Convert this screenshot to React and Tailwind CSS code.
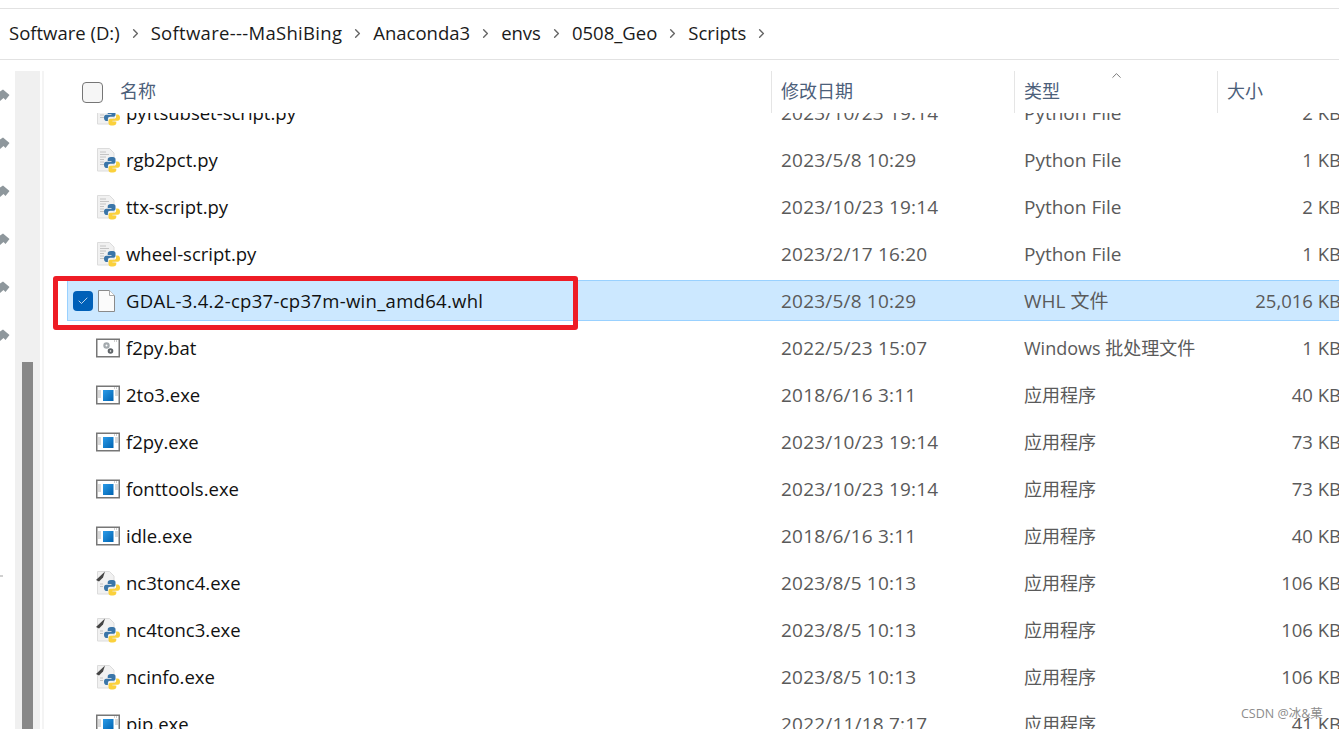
import { ChevronRight, ChevronUp, Check } from "lucide-react";

const crumbs = ["Software (D:)", "Software---MaShiBing", "Anaconda3", "envs", "0508_Geo", "Scripts"];

const files = [
  { name: "pyftsubset-script.py", date: "2023/10/23 19:14", type: "Python File", size: "2 KB", icon: "py" },
  { name: "rgb2pct.py", date: "2023/5/8 10:29", type: "Python File", size: "1 KB", icon: "py" },
  { name: "ttx-script.py", date: "2023/10/23 19:14", type: "Python File", size: "2 KB", icon: "py" },
  { name: "wheel-script.py", date: "2023/2/17 16:20", type: "Python File", size: "1 KB", icon: "py" },
  { name: "GDAL-3.4.2-cp37-cp37m-win_amd64.whl", date: "2023/5/8 10:29", type: "WHL 文件", size: "25,016 KB", icon: "file", selected: true },
  { name: "f2py.bat", date: "2022/5/23 15:07", type: "Windows 批处理文件", size: "1 KB", icon: "bat" },
  { name: "2to3.exe", date: "2018/6/16 3:11", type: "应用程序", size: "40 KB", icon: "exe" },
  { name: "f2py.exe", date: "2023/10/23 19:14", type: "应用程序", size: "73 KB", icon: "exe" },
  { name: "fonttools.exe", date: "2023/10/23 19:14", type: "应用程序", size: "73 KB", icon: "exe" },
  { name: "idle.exe", date: "2018/6/16 3:11", type: "应用程序", size: "40 KB", icon: "exe" },
  { name: "nc3tonc4.exe", date: "2023/8/5 10:13", type: "应用程序", size: "106 KB", icon: "pyexe" },
  { name: "nc4tonc3.exe", date: "2023/8/5 10:13", type: "应用程序", size: "106 KB", icon: "pyexe" },
  { name: "ncinfo.exe", date: "2023/8/5 10:13", type: "应用程序", size: "106 KB", icon: "pyexe" },
  { name: "pip.exe", date: "2022/11/18 7:17", type: "应用程序", size: "41 KB", icon: "exe" },
];

function PythonMark() {
  return (
    <g transform="translate(1 0)">
      <path d="M14 9c-2.300 0-3.300 1-3.300 2.400V13h3.800v.8H9.300C7.800 13.800 7 15 7 16.800s.8 3.200 2.300 3.200h1.600v-2c0-1.400 1-2.300 2.400-2.300h3.200c1.200 0 2-.9 2-2v-2.500C18.500 10 17.500 9 16 9z" fill="#3a75a8" />
      <path d="M16 24.500c2.300 0 3.300-1 3.300-2.400V20.500h-3.800v-.8h5.200c1.500 0 2.300-1.200 2.300-3s-.8-3.200-2.300-3.200h-1.600v2c0 1.400-1 2.300-2.400 2.300h-3.200c-1.200 0-2 .9-2 2V22c0 1.500 1 2.500 2.500 2.500z" fill="#fbd13c" />
    </g>
  );
}

function FileIcon({ kind }) {
  if (kind === "file") {
    return (
      <svg width="24" height="24" viewBox="0 0 24 24">
        <path d="M2.500 1.500h11l5 5v16h-16z" fill="#fbfbfb" stroke="#8a8a8a" />
        <path d="M13.500 1.500v5h5" fill="#fff" stroke="#a8a8a8" />
      </svg>
    );
  }
  if (kind === "bat" || kind === "exe") {
    return (
      <svg width="24" height="24" viewBox="0 0 24 24">
        <rect x="0.750" y="3.250" width="22.500" height="17.500" fill="#fff" stroke="#777" strokeWidth="1.500" />
        <path d="M18 5h4" stroke="#a0a0a0" strokeDasharray="1 1" />
        {kind === "bat" ? (
          <g>
            <circle cx="10.500" cy="9.500" r="3.200" fill="#a3a9ad" />
            <circle cx="10.500" cy="9.500" r="1" fill="#fff" />
            <circle cx="14.500" cy="15" r="2.800" fill="#5f6468" />
            <circle cx="14.500" cy="15" r="0.800" fill="#fff" />
          </g>
        ) : (
          <g>
            <defs>
              <linearGradient id="exeBlue" x1="0" y1="0" x2="1" y2="1">
                <stop offset="0" stopColor="#2b9be8" />
                <stop offset="1" stopColor="#0063b1" />
              </linearGradient>
            </defs>
            <rect x="7" y="7" width="10.500" height="11" fill="url(#exeBlue)" />
            <path d="M2 8h3M2 10h3M2 12h3M2 14h3M19 8h3M19 10h3M19 12h3" stroke="#b5b5b5" />
          </g>
        )}
      </svg>
    );
  }
  return (
    <svg width="24" height="24" viewBox="0 0 24 24" className="overflow-visible">
      <path d="M1.500 .5h12l4.500 4.500v18H1.500z" fill="#f1f1f1" stroke="#dcdcdc" />
      {kind === "py" ? (
        <path d="M4 4h6M4 6.500h9M4 9h6M4 11.500h4M4 14h4M4 16.500h4" stroke="#c4c4c4" />
      ) : (
        <g>
          <path d="M0 9 9 .5 7 6.500 3 10.500z" fill="#444" />
          <path d="M4 13h3M4 15.500h3" stroke="#c4c4c4" />
        </g>
      )}
      <PythonMark />
    </svg>
  );
}

function PinMark() {
  return (
    <svg width="10" height="12" viewBox="0 0 10 12" className="block">
      <path d="M0 2.500 3 .5 9.500 6 5.500 11 3.500 9 0 12z" fill="#8e979c" />
    </svg>
  );
}

function FileRow({ file }) {
  const cjkOnly = /应用程序|批处理/.test(file.type);
  return (
    <div
      className={`grid h-[41px] w-[1274px] shrink-0 grid-cols-[714px_243px_193px_124px] items-center pt-[2px] ${
        file.selected ? "bg-[#cce8ff] outline outline-1 -outline-offset-1 outline-[#99d1ff]" : ""
      }`}
    >
      <div className="mt-[-2px] flex items-center pl-[6px]">
        {file.selected ? (
          <span className="flex h-[20px] w-[20px] items-center justify-center rounded-[4px] bg-[#0060b8]">
            <Check size={12} strokeWidth={1.5} className="text-white" />
          </span>
        ) : (
          <span className="w-[20px]" />
        )}
        <span className="ml-[3px] flex w-[24px] justify-center">
          <FileIcon kind={file.icon} />
        </span>
        <span className={`ml-[6px] text-[#111] ${file.selected ? "tracking-[0.3px]" : ""}`}>{file.name}</span>
      </div>
      <div className="text-[19px] tracking-[0.2px] text-[#5a5a5a]">{file.date}</div>
      <div className={`text-[#5a5a5a] ${cjkOnly ? "text-[18px]" : "text-[19px]"}`}>{file.type}</div>
      <div className="mt-[-2px] text-right text-[#5a5a5a]">{file.size}</div>
    </div>
  );
}

export default function App() {
  return (
    <div className="relative flex h-[729px] w-[1339px] flex-col overflow-hidden bg-white font-['Open_Sans','Noto_Sans_CJK_SC',sans-serif] text-[18.500px]">
      <div className="mt-[8px] flex h-[52px] shrink-0 items-center border-y border-[#e2e2e2] pb-[2px] pl-[9px] text-[#1a1a1a]">
        {crumbs.map((c) => (
          <div key={c} className="flex items-center">
            <span className={c.includes("---") ? "tracking-[0.3px]" : ""}>{c}</span>
            <ChevronRight size={15} strokeWidth={2.250} className="mx-[8px] text-[#666]" />
          </div>
        ))}
      </div>

      <div className="flex min-h-0 flex-1">
        <div className="flex w-[15px] shrink-0 flex-col gap-[36px] pt-[29px]">
          {[0, 1, 2, 3, 4, 5].map((i) => (
            <PinMark key={i} />
          ))}
        </div>
        <div className="mt-[11px] w-[25px] shrink-0 bg-[#f0f0f0] pl-[7px] pt-[291px]">
          <div className="h-full w-[11px] bg-[#888888]" />
        </div>
        <div className="ml-[2px] mt-[11px] w-[2px] shrink-0 bg-[#f4f4f4]" />

        <div className="flex min-w-0 flex-1 flex-col overflow-hidden">
          <div className="mt-[11px] grid h-[42px] w-[1320px] shrink-0 grid-cols-[727px_243px_203px_123px] text-[18px] text-[#4c607a]">
            <div className="flex items-center pl-[38px]">
              <span className="h-[21px] w-[21px] rounded-[4px] border border-[#767676] bg-[#f6f6f6]" />
              <span className="mb-[2px] ml-[17px]">名称</span>
            </div>
            <div className="flex items-center border-l border-[#e5e5e5] pb-[2px] pl-[9px]">修改日期</div>
            <div className="relative flex items-center border-l border-[#e5e5e5] pb-[2px] pl-[9px]">
              类型
              <ChevronUp size={15} strokeWidth={1.250} className="absolute left-[94px] top-[-3px] text-[#555]" />
            </div>
            <div className="flex items-center border-l border-[#e5e5e5] pb-[2px] pl-[9px]">大小</div>
          </div>

          <div className="flex min-h-0 flex-1 flex-col overflow-hidden">
            <div className="ml-[23px] mt-[-21px] flex flex-col gap-[6px]">
              {files.map((f) => (
                <FileRow key={f.name} file={f} />
              ))}
            </div>
          </div>
        </div>
      </div>

      {/* annotation drawn on top of the screenshot */}
      <div className="absolute left-[53px] top-[276px] h-[54px] w-[525px] rounded-[3px] border-[5px] border-[#ee1c25]" />
      <div className="absolute left-[1241px] top-[705px] text-[12.500px] text-[#8c8c8c]">CSDN @冰&amp;菓</div>
      <div className="absolute left-0 top-[575px] h-[2px] w-[3px] bg-[#d0d0d0]" />
    </div>
  );
}
